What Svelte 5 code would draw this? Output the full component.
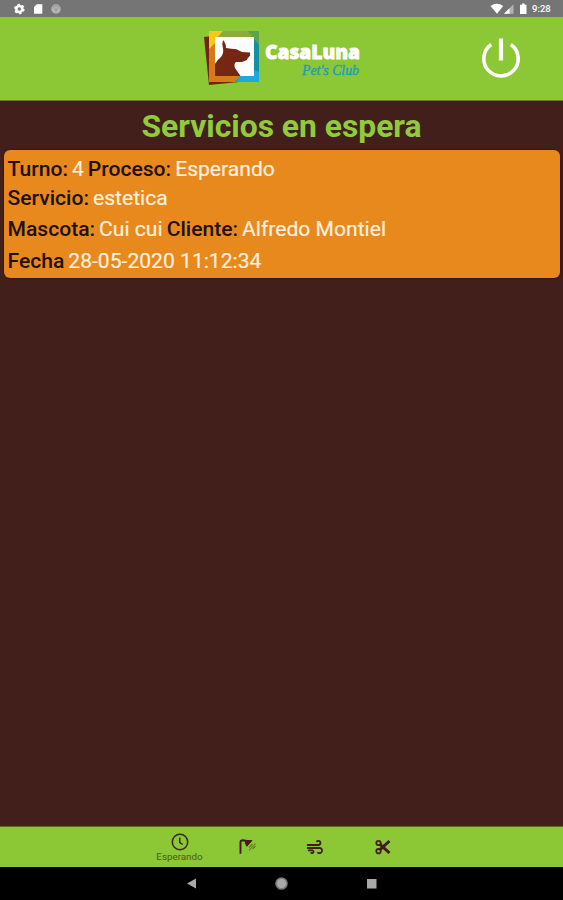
<script>
  const rows = [
    { h: 28, fields: [['Turno:', '4'], ['Proceso:', 'Esperando']] },
    { h: 29, fields: [['Servicio:', 'estetica']] },
    { h: 34, fields: [['Mascota:', 'Cui cui'], ['Cliente:', 'Alfredo Montiel']] },
    { h: 30, fields: [['Fecha', '28-05-2020 11:12:34']] }
  ];
</script>

<div class="screen">
  <div class="status">
    <svg class="left" width="64" height="17" viewBox="0 0 64 17">
      <circle cx="19.3" cy="9" r="3" fill="none" stroke="#fff" stroke-width="2.6" />
      <circle cx="19.3" cy="9" r="4.5" fill="none" stroke="#fff" stroke-width="1.6" stroke-dasharray="2.36 2.36" />
      <path d="M36.8 4.2H42.3V13.8H34V7Z" fill="#fff" />
      <circle cx="56" cy="9" r="4.7" fill="#b5b5b5" />
      <path d="M53 8.5a3 3 0 0 1 6 0M54.5 9.5h3M56 8v4" stroke="#959595" fill="none" />
    </svg>
    <svg class="signals" width="42" height="17" viewBox="0 0 42 17">
      <path d="M.5 6Q7 1.7 13.2 6L7 13.8Z" fill="#fff" />
      <path d="M14 13.8L23.5 4.3V13.8Z" fill="#b2b2b2" />
      <path d="M14 13.8L19.5 8.3V13.8Z" fill="#fff" />
      <path d="M30 4.7h2V3.6h2.5v1.1h2v9.2H30Z" fill="#fff" />
    </svg>
    <span class="time">9:28</span>
  </div>

  <header>
    <svg class="logo" width="160" height="60" viewBox="202 28 160 60">
      <path d="M204 37L213 36L217 79L239 82L209 85Z" fill="#732413" />
      <path d="M209 31H259V82H209Z" fill="#168fa0" />
      <path d="M209 31H236L224 40H215V48L209 52Z" fill="#f5ca1d" />
      <path d="M222 31H248L255 39H215Z" fill="#8aac3d" />
      <path d="M209 31H223L209 47Z" fill="#fbc816" />
      <path d="M209 49L215 43V76H240L235 82H209Z" fill="#d77b16" />
      <path d="M240 76L254 70L259 72V82H236Z" fill="#20a8dd" />
      <path d="M248 31H259V45Z" fill="#5aa44e" />
      <path d="M215 37H254V76H215Z" fill="#fff" />
      <path d="M223 40Q226 43 226 48Q231 49 236.5 49.2L242 52L250 52.5L250.2 55.5L247.5 58.5L247 60L242 62L236 62Q233.5 64 235 68L240.5 76H215V64Q217 60 221 57Q224 53 223 49Q221.5 44 223 40Z" fill="#752714" />
      <text class="brand" x="265" y="58.8" textLength="95" lengthAdjust="spacingAndGlyphs">CasaLuna</text>
      <text class="script" x="302" y="75.2" textLength="57" lengthAdjust="spacingAndGlyphs">Pet's Club</text>
    </svg>
    <button aria-label="Salir">
      <svg width="44" height="44" viewBox="0 0 44 44" fill="none" stroke="#fff" stroke-width="3.6">
        <path d="M22 2.5V24.5" stroke-width="4.2" />
        <path d="M12.2 8.6A17.2 17.2 0 1 0 31.8 8.6" />
      </svg>
    </button>
  </header>

  <main>
    <h1>Servicios en espera</h1>
    <article>
      {#each rows as row}
        <div class="row" style="height:{row.h}px">
          {#each row.fields as [label, value]}
            <b>{label}</b><span>{value}</span>
          {/each}
        </div>
      {/each}
    </article>
  </main>

  <nav class="tabs">
    <div class="tab active">
      <svg width="20" height="18" viewBox="0 0 20 18" fill="none" stroke="#3b2610" stroke-width="1.5">
        <circle cx="10" cy="9" r="7.7" />
        <path d="M9.8 4.5V9.5L12.7 11.5" />
      </svg>
      <span>Esperando</span>
    </div>
    <div class="tab">
      <svg width="20" height="18" viewBox="0 0 20 18">
        <path d="M2.5 15.7V4Q2.5 2.2 5 2.2L9 3" fill="none" stroke="#421d18" stroke-width="1.9" />
        <path d="M7.5 2.5H14L8.8 8.3Q6.5 5 7.5 2.5Z" fill="#421d18" stroke="#421d18" />
        <path d="M17.5 5.5L11 12.5M14.5 6L11 9.5M17.5 8L14.5 11" stroke="#66752a" stroke-width="1.1" />
      </svg>
    </div>
    <div class="tab">
      <svg width="20" height="18" viewBox="0 0 20 18" fill="none" stroke="#421d18" stroke-width="1.8" stroke-linecap="round">
        <path d="M1.7 7H12.3A2.1 2.1 0 1 0 11 3.3M1.7 10H13.8A2.6 2.6 0 1 1 12 14.7M2.7 12.4H6.4A1.4 1.4 0 1 1 5.2 14.8" />
      </svg>
    </div>
    <div class="tab">
      <svg width="20" height="18" viewBox="0 0 20 18" fill="none" stroke="#421d18">
        <circle cx="4.5" cy="5" r="2.2" stroke-width="1.8" />
        <circle cx="4.5" cy="13.2" r="2.2" stroke-width="1.8" />
        <path d="M6 6.4L15.5 15M6 11.7L15.5 3" stroke-width="3" />
      </svg>
    </div>
  </nav>

  <footer>
    <svg width="563" height="33" viewBox="0 0 563 33" fill="#a9a9a9">
      <path d="M187 16.5L196 11.5V21.5Z" />
      <circle cx="281.5" cy="16.5" r="6.3" fill="#777" />
      <circle cx="281.5" cy="16.5" r="4.7" />
      <rect x="367" y="12" width="9.5" height="9.5" />
    </svg>
  </footer>
</div>

<style>
  :global(body) { margin: 0; background: #421f1a; }
  .screen {
    width: 563px; height: 900px; overflow: hidden;
    display: flex; flex-direction: column;
    background: #421f1a; font-family: Roboto, sans-serif;
  }
  svg { display: block; flex: none; }
  .status { height: 17px; flex: none; display: flex; align-items: center; background: #757575; }
  .signals { margin-left: auto; }
  .time { width: 31px; padding-top: 1px; box-sizing: border-box; color: #fff; font: 500 9.5px/16px Roboto, sans-serif; }
  header {
    height: 84px; flex: none; box-sizing: border-box; padding: 0 40px 0 202px;
    display: flex; align-items: center; justify-content: space-between;
    background: #8cc735; border-bottom: 1px solid #74782b;
  }
  .logo { margin-bottom: 2px; overflow: visible; }
  .brand { font: 800 19px "Open Sans", sans-serif; fill: #fff; stroke: #fff; stroke-width: .8px; }
  .script { font: italic 500 15.5px "Liberation Serif", serif; fill: #249fb4; stroke: #249fb4; stroke-width: .5px; }
  button { border: 0; padding: 0 0 1px; background: none; }
  main { flex: 1; display: flex; flex-direction: column; }
  h1 { height: 49px; margin: 0; text-align: center; color: #91cb3c; font: 700 31.8px/51px Roboto, sans-serif; }
  article { height: 128px; box-sizing: border-box; margin: 0 3px 0 4px; padding: 5px 3.5px 0; border-radius: 6px; background: #e8891e; box-shadow: 0 0 2px #26080b; }
  .row { display: flex; align-items: center; white-space: nowrap; font-size: 21.1px; line-height: 28px; }
  .row b { font-weight: 500; color: #21100b; margin-right: 4px; }
  .row span { color: #fff0df; margin-right: 4px; -webkit-text-stroke: .2px #fff0df; }
  .tabs { height: 40px; flex: none; display: flex; justify-content: center; background: #8cc735; box-shadow: 0 -1px #69612a; }
  .tab { width: 68px; display: flex; flex-direction: column; align-items: center; justify-content: center; }
  .active { justify-content: flex-start; padding-top: 6px; box-sizing: border-box; }
  .active span { font-size: 9.8px; line-height: 11px; color: #4b5a1d; }
  footer { height: 33px; flex: none; background: #000; }
</style>
